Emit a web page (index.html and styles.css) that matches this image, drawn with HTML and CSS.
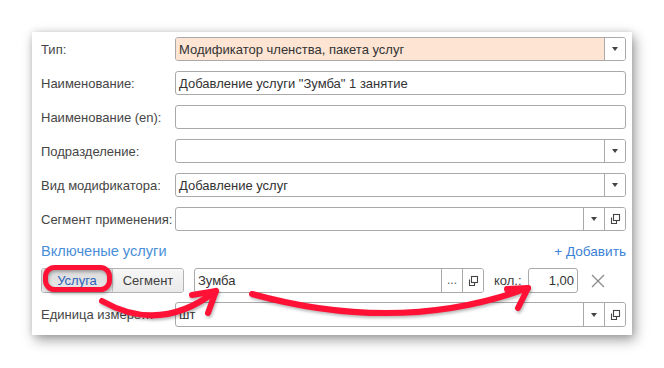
FILE: index.html
```html
<!DOCTYPE html>
<html lang="ru">
<head>
<meta charset="utf-8">
<link rel="stylesheet" href="styles.css">
</head>
<body>
<div class="page">
  <div class="panel">
    <div class="row">
      <div class="lbl">Тип:</div>
      <div class="field peach"><span class="val">Модификатор членства, пакета услуг</span><span class="fbtn"><i class="tri"></i></span></div>
    </div>
    <div class="row">
      <div class="lbl">Наименование:</div>
      <div class="field"><span class="val">Добавление услуги "Зумба" 1 занятие</span></div>
    </div>
    <div class="row">
      <div class="lbl">Наименование (en):</div>
      <div class="field"><span class="val"></span></div>
    </div>
    <div class="row">
      <div class="lbl">Подразделение:</div>
      <div class="field"><span class="val"></span><span class="fbtn"><i class="tri"></i></span></div>
    </div>
    <div class="row">
      <div class="lbl">Вид модификатора:</div>
      <div class="field"><span class="val">Добавление услуг</span><span class="fbtn"><i class="tri"></i></span></div>
    </div>
    <div class="row">
      <div class="lbl">Сегмент применения:</div>
      <div class="field"><span class="val"></span><span class="fbtn"><i class="tri"></i></span><span class="fbtn"><svg class="open" width="12" height="12" viewBox="0 0 12 12"><rect x="4.5" y="1.5" width="6" height="6" fill="none" stroke="#444" stroke-width="1.1"/><path d="M2.5 4.5 V10.5 H7.5 V8" fill="none" stroke="#444" stroke-width="1.1"/></svg></span></div>
    </div>
    <div class="section">
      <div class="section-title">Включеные услуги</div>
      <div class="add">+ Добавить</div>
    </div>
    <div class="row service-row">
      <div class="seg">
        <div class="seg-btn on">Услуга</div>
        <div class="seg-btn">Сегмент</div>
      </div>
      <div class="field zumba"><span class="val">Зумба</span><span class="fbtn dots">...</span><span class="fbtn"><svg class="open" width="12" height="12" viewBox="0 0 12 12"><rect x="4.5" y="1.5" width="6" height="6" fill="none" stroke="#444" stroke-width="1.1"/><path d="M2.5 4.5 V10.5 H7.5 V8" fill="none" stroke="#444" stroke-width="1.1"/></svg></span></div>
      <div class="qty-lbl">кол.:</div>
      <div class="field qty"><span class="val num">1,00</span></div>
      <svg class="close" width="14" height="14" viewBox="0 0 14 14"><path d="M1 1 L13 13 M13 1 L1 13" stroke="#8a8a8a" stroke-width="1.3"/></svg>
    </div>
    <div class="row unit-row">
      <div class="lbl unit-lbl">Единица измерения:</div>
      <div class="field"><span class="val">шт</span><span class="fbtn"><i class="tri"></i></span><span class="fbtn"><svg class="open" width="12" height="12" viewBox="0 0 12 12"><rect x="4.5" y="1.5" width="6" height="6" fill="none" stroke="#444" stroke-width="1.1"/><path d="M2.5 4.5 V10.5 H7.5 V8" fill="none" stroke="#444" stroke-width="1.1"/></svg></span></div>
    </div>
  </div>
</div>
<svg class="marks" width="664" height="368" viewBox="0 0 664 368">
  <g fill="none" stroke="#ff1236" stroke-linecap="round" stroke-linejoin="round">
    <rect x="45.5" y="267.5" width="64" height="22" rx="9" stroke-width="5"/>
    <path d="M102 301 Q160 334 216 291" stroke-width="6"/>
    <path d="M192 295 L216 291 L208 313" stroke-width="6"/>
    <path d="M252 294 Q400 335 528 288" stroke-width="6"/>
    <path d="M507 289 L528 288 L518 308" stroke-width="6"/>
  </g>
</svg>
</body>
</html>
```

FILE: styles.css
```css
* { box-sizing: border-box; }
html, body { margin: 0; padding: 0; }
body {
  background: #ffffff;
  width: 664px;
  height: 368px;
  overflow: hidden;
  position: relative;
  font-family: "Liberation Sans", Arial, sans-serif;
  font-size: 13px;
  color: #333;
}
.page { padding: 32px 0 0 32px; }
.panel {
  width: 600px;
  height: 303px;
  background: #fff;
  box-shadow: 3px 5px 12px rgba(0,0,0,0.38), 0 0 6px rgba(0,0,0,0.12);
  padding: 5px 6px 0 9px;
  display: flex;
  flex-direction: column;
  gap: 10px;
}
.row { display: flex; align-items: center; height: 24px; }
.lbl { width: 134px; flex: none; color: #454545; white-space: nowrap; }
.field {
  flex: 1;
  height: 24px;
  border: 1px solid #a9a9a9;
  border-radius: 3px;
  background: #fff;
  display: flex;
  align-items: stretch;
  overflow: hidden;
}
.field.peach .val { background: #fde4d3; }
.val {
  flex: 1;
  padding-left: 3px;
  display: flex;
  align-items: center;
  color: #333;
  white-space: nowrap;
}
.fbtn {
  width: 21px;
  flex: none;
  border-left: 1px solid #a9a9a9;
  display: flex;
  align-items: center;
  justify-content: center;
  background: #fff;
}
.tri {
  width: 0; height: 0;
  border-left: 3.5px solid transparent;
  border-right: 3.5px solid transparent;
  border-top: 4px solid #444;
}
.dots { color: #555; font-size: 12px; align-items: center; padding-bottom: 2px; }
.section {
  display: flex;
  justify-content: space-between;
  align-items: center;
  height: 20px;
  margin-bottom: -3px;
}
.section-title { color: #4a8fd8; font-size: 14.6px; }
.add { color: #3b82d6; font-size: 13.6px; }
.service-row { height: 25px; }
.service-row .field { height: 25px; }
.seg {
  display: flex;
  width: 143px;
  height: 25px;
  border: 1px solid #b3b3b3;
  border-radius: 3px;
  overflow: hidden;
  flex: none;
}
.seg-btn {
  flex: 1;
  display: flex;
  align-items: center;
  justify-content: center;
  background: linear-gradient(#f7f7f7, #e9e9e9);
  color: #404040;
}
.seg-btn.on {
  background: linear-gradient(#dcdcdc, #e8e8e8);
  color: #2d62b8;
  border-right: 1px solid #c4c4c4;
}
.zumba { flex: none; width: 290px; margin-left: 10px; }
.qty-lbl { margin-left: 10px; width: 34px; color: #404040; }
.qty { flex: none; width: 50px; }
.num { justify-content: flex-end; padding-right: 3px; }
.close { margin-left: 13px; }
.unit-row { height: 25px; margin-top: -1px; }
.unit-row .field { height: 25px; }
.unit-lbl { width: 134px; overflow: hidden; text-overflow: ellipsis; padding-right: 14px; }
.marks {
  position: absolute;
  left: 0; top: 0;
  pointer-events: none;
  filter: drop-shadow(1px 2px 1.5px rgba(0,0,0,0.28));
}
```
